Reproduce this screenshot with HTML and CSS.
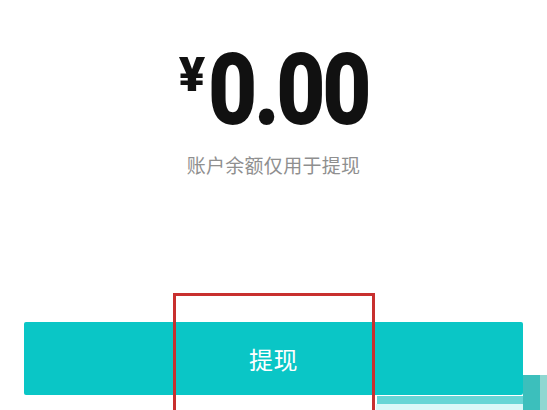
FILE: index.html
```html
<!DOCTYPE html>
<html lang="zh-CN">
<head>
<meta charset="utf-8">
<title>提现</title>
<link rel="stylesheet" href="styles.css">
</head>
<body>
<main class="page">
  <div class="amount">
    <span class="currency">¥</span>
    <span class="value">0.00</span>
  </div>
  <p class="note">账户余额仅用于提现</p>
  <button class="withdraw" type="button">提现</button>
</main>
<div class="mark"></div>
<div class="ghost ghost-strip"></div>
<div class="ghost ghost-pale"></div>
<div class="ghost ghost-dark"></div>
<div class="ghost ghost-light"></div>
</body>
</html>
```

FILE: styles.css
```css
html, body {
  margin: 0;
  padding: 0;
  background: #ffffff;
  width: 547px;
  height: 410px;
  overflow: hidden;
  position: relative;
}

.page {
  display: flex;
  flex-direction: column;
  align-items: center;
  padding-top: 40px;
  font-family: "Noto Sans CJK SC", "Noto Sans", sans-serif;
}

.amount {
  display: flex;
  align-items: flex-start;
  color: #111111;
  font-family: Roboto, "Liberation Sans", sans-serif;
  font-weight: 900;
  line-height: 1;
}

.currency {
  font-size: 49px;
  margin-top: 10px;
  margin-right: 3px;
}

.value {
  display: inline-block;
  font-size: 100px;
  letter-spacing: -4px;
  transform: scaleX(0.85);
  transform-origin: center;
  margin: 0 -14px 0 -14px;
}

.note {
  margin: 15px 0 0 0;
  font-size: 19px;
  line-height: 19px;
  color: #8f8f8f;
  letter-spacing: 0.3px;
}

.withdraw {
  margin-top: 148px;
  width: 499px;
  height: 73px;
  border: 0;
  border-radius: 2px;
  background: #0ac6c6;
  color: #ffffff;
  font-family: "Noto Sans CJK SC", "Noto Sans", sans-serif;
  font-weight: 400;
  font-size: 24px;
  padding: 0;
  letter-spacing: 0.5px;
}

.mark {
  position: absolute;
  left: 173px;
  top: 293px;
  width: 196px;
  height: 114px;
  border: 3px solid #c8302f;
  border-bottom: 0;
}

.ghost {
  position: absolute;
}

.ghost-strip {
  left: 377px;
  top: 396px;
  width: 146px;
  height: 8px;
  background: #66d5d5;
}

.ghost-pale {
  left: 376px;
  top: 404px;
  width: 147px;
  height: 6px;
  background: #daf8f8;
}

.ghost-dark {
  left: 523px;
  top: 375px;
  width: 17px;
  height: 35px;
  background: #3cbfbc;
}

.ghost-light {
  left: 540px;
  top: 375px;
  width: 7px;
  height: 35px;
  background: #90d7d1;
}
```
